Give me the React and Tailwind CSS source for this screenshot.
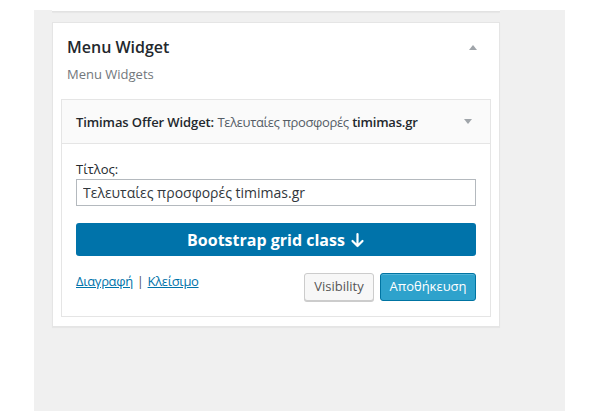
import React from "react";

const font = { fontFamily: '"Open Sans", "Noto Sans", sans-serif' };

const Arrow = ({ up }) => (
  <span
    className={
      up
        ? "block w-0 h-0 border-l-[4px] border-r-[4px] border-b-[5px] border-l-transparent border-r-transparent border-b-[#a0a5aa]"
        : "block w-0 h-0 border-l-[4px] border-r-[4px] border-t-[5px] border-l-transparent border-r-transparent border-t-[#a0a5aa]"
    }
  />
);

const App = () => {
  return (
    <div className="w-[600px] h-[411px] bg-white overflow-hidden" style={font}>
      <div className="ml-[34px] mt-[10px] w-[531px] h-[401px] bg-[#f0f0f0] pl-[18px]">
        <div className="w-[448px] h-[2px] bg-white border-b border-[#e2e2e2] shadow-[0_1px_1px_rgba(0,0,0,0.04)]" />

        <div className="mt-[10px] w-[448px] bg-white border border-[#e5e5e5] shadow-[0_1px_1px_rgba(0,0,0,0.04)] pb-[9px]">
          <div className="flex items-center justify-between pl-[14px] pr-[22px] pt-[14px]">
            <h2 className="text-[16px] leading-[20px] font-semibold text-[#23282d]">Menu Widget</h2>
            <Arrow up />
          </div>
          <p className="pl-[14px] mt-[8px] text-[13px] leading-[18px] text-[#72777c]">Menu Widgets</p>

          <div className="mt-[16px] mx-[8px] border border-[#e5e5e5] bg-white">
            <div className="h-[44px] bg-[#fafafa] border-b border-[#e5e5e5] flex items-center justify-between pl-[14px] pr-[18px]">
              <h3 className="text-[13px] leading-[18px] text-[#23282d]">
                <span className="font-semibold tracking-[-0.1px]">Timimas Offer Widget:</span>{" "}
                <span className="text-[#555d66] tracking-[-0.35px]">Τελευταίες προσφορές</span>{" "}
                <span className="font-semibold tracking-[-0.2px]">timimas.gr</span>
              </h3>
              <Arrow />
            </div>

            <div className="px-[14px] pt-[16px] pb-[15px]">
              <label className="block text-[13px] leading-[18px] text-[#23282d]">Τίτλος:</label>
              <input
                readOnly
                value="Τελευταίες προσφορές timimas.gr"
                className="mt-[1px] block w-full h-[27px] border border-[#b4b9be] px-[6px] text-[14px] text-[#32373c] outline-none"
                style={font}
              />
              <button className="mt-[17px] w-full h-[33px] rounded-[3px] bg-[#0073aa] text-white text-[16px] font-bold flex items-center justify-center gap-[5px]">
                Bootstrap grid class
                <svg width="15" height="16" viewBox="0 0 15 16" fill="none" stroke="white" strokeWidth="2.2" strokeLinecap="round" strokeLinejoin="round">
                  <path d="M7.5 2v12M2.5 9l5 5 5-5" />
                </svg>
              </button>

              <div className="mt-[17px] flex items-start justify-between">
                <div className="text-[13px] leading-[18px] text-[#555] mt-[-1px] tracking-[-0.35px]">
                  <a href="#" className="text-[#0073aa] underline">Διαγραφή</a>
                  <span className="mx-[4px]">|</span>
                  <a href="#" className="text-[#0073aa] underline">Κλείσιμο</a>
                </div>
                <div className="flex gap-[6px]">
                  <button className="h-[28px] w-[70px] rounded-[3px] border border-[#cccccc] bg-[#f7f7f7] text-[13px] text-[#555] shadow-[0_1px_0_#ccc]">
                    Visibility
                  </button>
                  <button className="h-[28px] w-[96px] rounded-[3px] border border-[#0074a2] bg-[#2ea2cc] text-[13px] text-white shadow-[inset_0_1px_0_rgba(120,200,230,0.5)]">
                    Αποθήκευση
                  </button>
                </div>
              </div>
            </div>
          </div>
        </div>
      </div>
    </div>
  );
};

export default App;
